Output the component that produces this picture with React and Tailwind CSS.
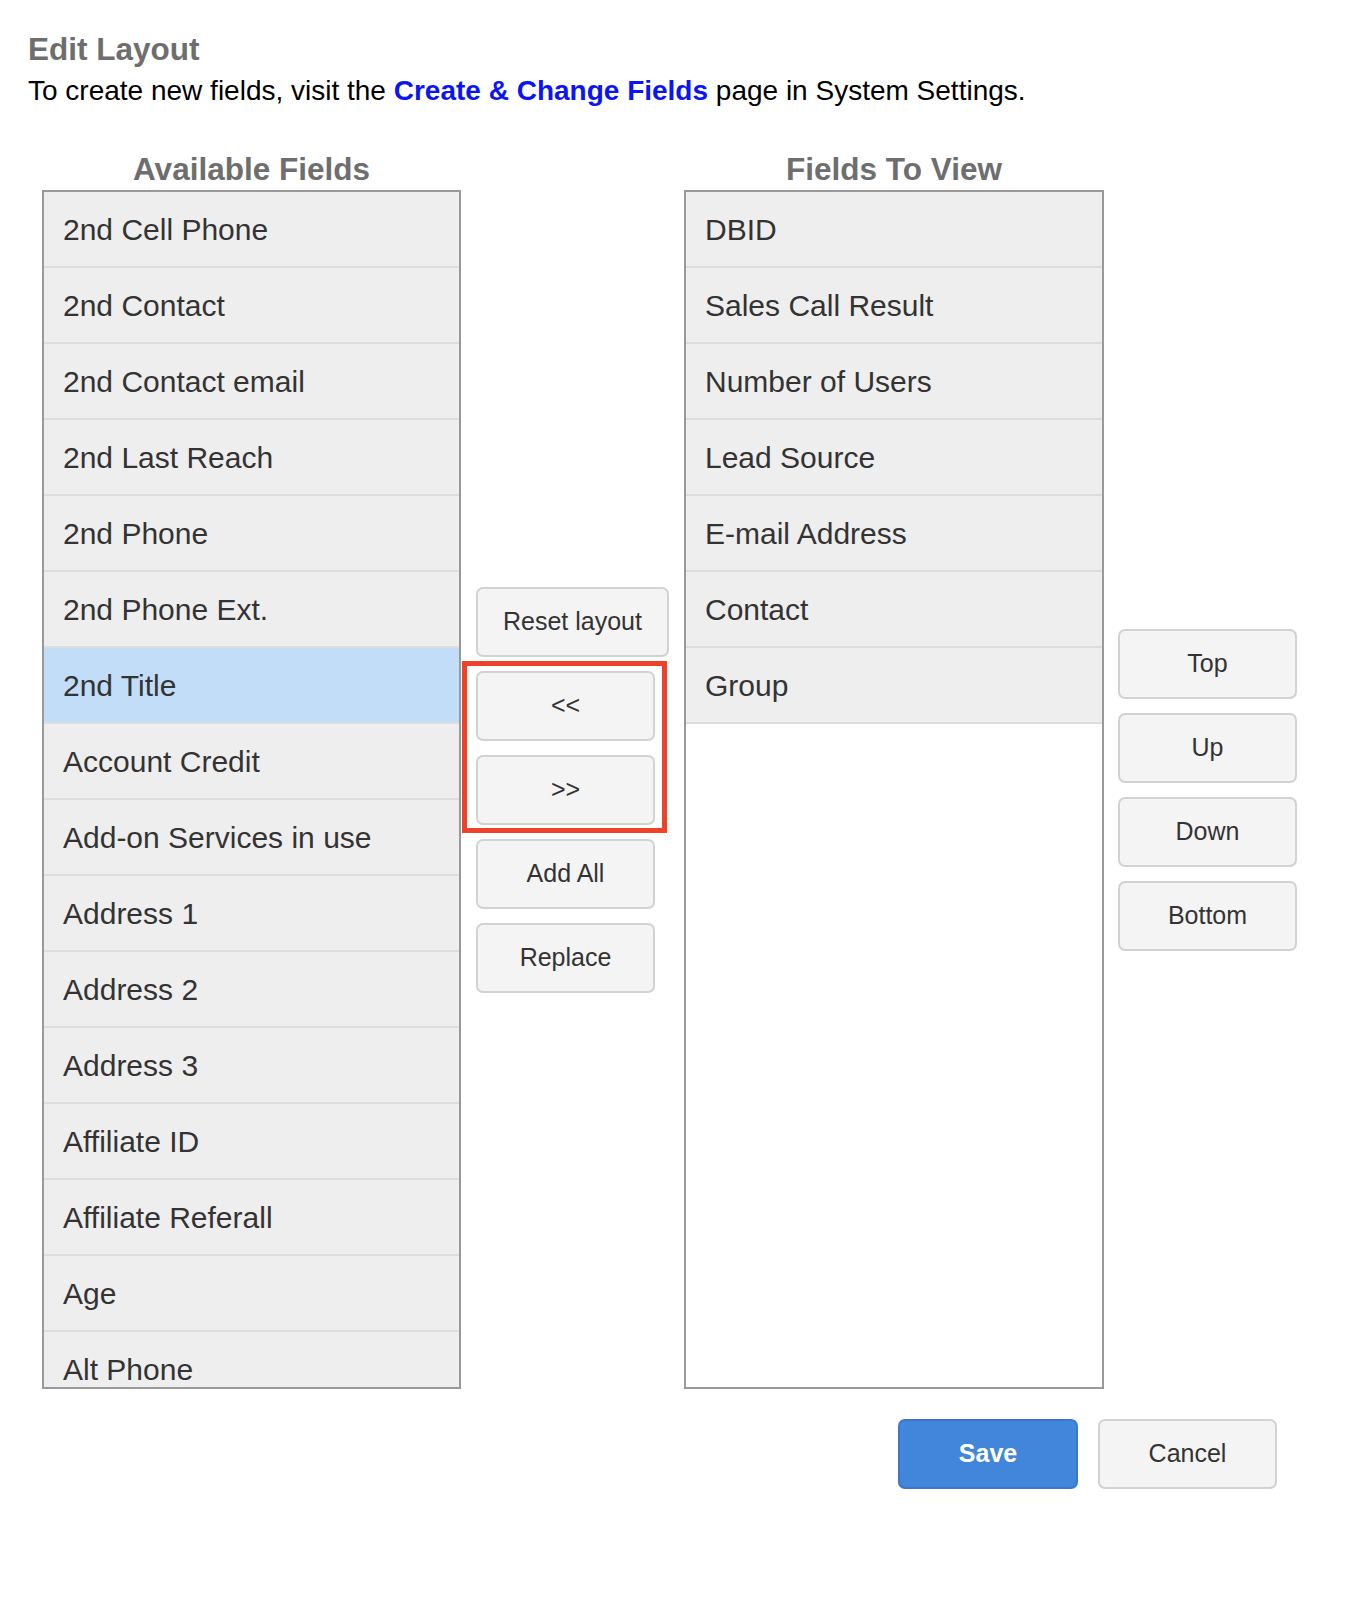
import React, { useState } from 'react';

const available = [
    '2nd Cell Phone',
    '2nd Contact',
    '2nd Contact email',
    '2nd Last Reach',
    '2nd Phone',
    '2nd Phone Ext.',
    '2nd Title',
    'Account Credit',
    'Add-on Services in use',
    'Address 1',
    'Address 2',
    'Address 3',
    'Affiliate ID',
    'Affiliate Referall',
    'Age',
    'Alt Phone',
    'Alt Phone 2',
];

const toView = [
    'DBID',
    'Sales Call Result',
    'Number of Users',
    'Lead Source',
    'E-mail Address',
    'Contact',
    'Group',
];

function FieldList({ items, selected, onSelect, width }) {
    return (
        <div className={`${width} h-[1199px] border-2 border-[#999999] bg-white overflow-hidden`}>
            {items.map((item) => (
                <div
                    key={item}
                    onClick={() => onSelect(item)}
                    className={`h-[76px] flex items-center pl-[19px] pt-[1px] border-b-2 border-[#dddddd] text-[30px] text-[#333333] cursor-pointer ${selected === item ? 'bg-[#c2ddf7]' : 'bg-[#eeeeee]'}`}
                >
                    {item}
                </div>
            ))}
        </div>
    );
}

function Btn({ children, className = '' }) {
    return (
        <button
            type="button"
            className={`h-[70px] min-w-[179px] px-[25px] whitespace-nowrap rounded-[7px] border-2 border-[#d2d2d2] bg-[#f4f4f4] text-[25px] text-[#333333] ${className}`}
        >
            {children}
        </button>
    );
}

export default function App() {
    const [selected, setSelected] = useState('2nd Title');

    return (
        <div className="min-h-[1620px] bg-white pl-[28px] pt-[31px] font-['Liberation_Sans',Arial,sans-serif]">
            <h1 className="text-[31.5px] leading-[36px] font-bold text-[#6e6e6e]">Edit Layout</h1>
            <p className="mt-[8px] text-[28px] leading-[32px] text-black">
                To create new fields, visit the <a href="#" className="font-bold text-[#0a14f5]">Create &amp; Change Fields</a> page in System Settings.
            </p>

            <div className="mt-[44px] flex">
                <h2 className="ml-[14px] w-[419px] text-center text-[31.5px] leading-[36px] font-bold text-[#6e6e6e]">Available Fields</h2>
                <h2 className="ml-[223px] w-[420px] text-center text-[31.5px] leading-[36px] font-bold text-[#6e6e6e]">Fields To View</h2>
            </div>

            <div className="mt-[3px] flex items-center">
                <div className="ml-[14px]">
                    <FieldList items={available} selected={selected} onSelect={setSelected} width="w-[419px]" />
                </div>

                <div className="ml-[15px] w-[191px] flex flex-col items-start gap-[14px]">
                    <Btn>Reset layout</Btn>
                    <div className="relative flex flex-col gap-[14px]">
                        <Btn>&lt;&lt;</Btn>
                        <Btn>&gt;&gt;</Btn>
                        {/* highlight frame around the move buttons */}
                        <span className="pointer-events-none absolute -left-[14px] -top-[10px] -right-[12px] -bottom-[8px] border-[5px] border-[#ee4328]"></span>
                    </div>
                    <Btn>Add All</Btn>
                    <Btn>Replace</Btn>
                </div>

                <div className="ml-[17px]">
                    <FieldList items={toView} selected={selected} onSelect={setSelected} width="w-[420px]" />
                </div>

                <div className="ml-[14px] flex flex-col gap-[14px]">
                    <Btn>Top</Btn>
                    <Btn>Up</Btn>
                    <Btn>Down</Btn>
                    <Btn>Bottom</Btn>
                </div>
            </div>

            <div className="mt-[30px] w-[1249px] flex justify-end gap-[20px]">
                <button type="button" className="h-[70px] w-[180px] rounded-[7px] border-2 border-[#3a78cc] bg-[#4286dc] text-[25px] font-bold text-white">
                    Save
                </button>
                <Btn>Cancel</Btn>
            </div>
        </div>
    );
}
